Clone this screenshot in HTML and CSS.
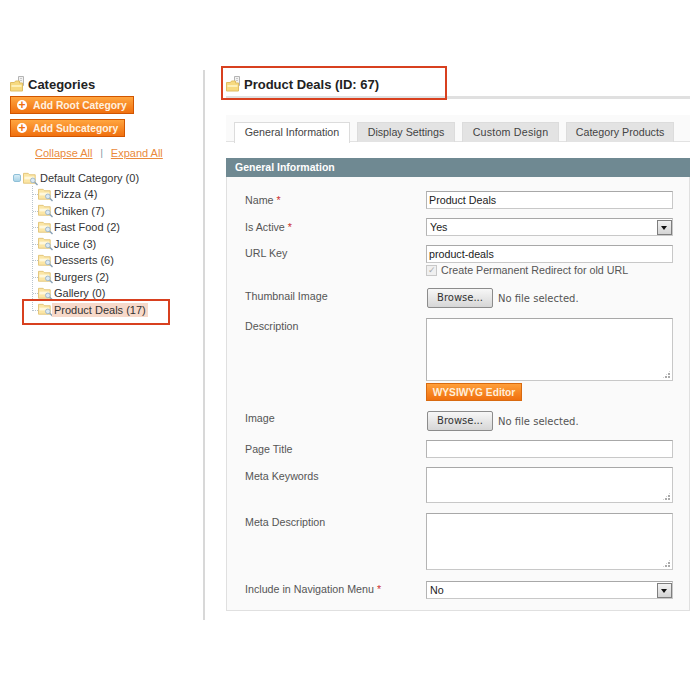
FILE: index.html
```html
<!DOCTYPE html>
<html lang="en">
<head>
    <meta charset="UTF-8">
    <title>Product Deals (ID: 67)</title>
    <link rel="stylesheet" href="styles.css">
</head>
<body>
    <svg class="defs" width="0" height="0">
        <symbol id="head-folder" viewBox="0 0 16 16">
            <path d="M8.500 .5h5v9h-5z" fill="#f2f2f2" stroke="#b4b4b4"/>
            <path d="M10 2.500h2M10 4.500h2" stroke="#c9c9c9"/>
            <path d="M.5 6.500h4l1-1.500h4v2h3v8h-12z" fill="#f7da80" stroke="#e0bd62"/>
            <path d="M1.500 9h10v2h-10z" fill="#fdf0b8"/>
        </symbol>
        <symbol id="tree-folder" viewBox="0 0 16 16">
            <path d="M.5 2.500h5l1.500 1.500h6v9h-12.500z" fill="#fbe6a6" stroke="#e2c477"/>
            <path d="M1.500 6h10.500v3h-10.500z" fill="#fff8dc"/>
            <circle cx="10.500" cy="10" r="2.500" fill="#dbe9f4" stroke="#9db5c8"/>
            <path d="M12.500 12l3 3" stroke="#88a0b4" stroke-width="1.500"/>
        </symbol>
    </svg>

    <div class="page">
        <div class="sidebar">
            <h3 class="side-title">
                <svg class="head-icon"><use href="#head-folder"/></svg>
                Categories
            </h3>
            <div class="side-buttons">
                <button class="add-btn">
                    <span class="plus">+</span>Add Root Category
                </button>
                <button class="add-btn">
                    <span class="plus">+</span>Add Subcategory
                </button>
            </div>
            <div class="tree-links">
                <a href="#">Collapse All</a>
                <span class="sep">|</span>
                <a href="#">Expand All</a>
            </div>
            <div class="tree">
                <div class="tree-root">
                    <span class="minus"></span>
                    <svg class="tree-icon"><use href="#tree-folder"/></svg>
                    <span class="node">Default Category (0)</span>
                </div>
                <ul class="tree-list">
                    <li><svg class="tree-icon"><use href="#tree-folder"/></svg><span class="node">Pizza (4)</span></li>
                    <li><svg class="tree-icon"><use href="#tree-folder"/></svg><span class="node">Chiken (7)</span></li>
                    <li><svg class="tree-icon"><use href="#tree-folder"/></svg><span class="node">Fast Food (2)</span></li>
                    <li><svg class="tree-icon"><use href="#tree-folder"/></svg><span class="node">Juice (3)</span></li>
                    <li><svg class="tree-icon"><use href="#tree-folder"/></svg><span class="node">Desserts (6)</span></li>
                    <li><svg class="tree-icon"><use href="#tree-folder"/></svg><span class="node">Burgers (2)</span></li>
                    <li><svg class="tree-icon"><use href="#tree-folder"/></svg><span class="node">Gallery (0)</span></li>
                    <li><svg class="tree-icon"><use href="#tree-folder"/></svg><span class="node selected">Product Deals (17)</span></li>
                </ul>
            </div>
            <div class="red-box box-tree"></div>
        </div>

        <div class="main">
            <h3 class="main-title">
                <svg class="head-icon"><use href="#head-folder"/></svg>
                Product Deals (ID: 67)
            </h3>
            <div class="red-box box-title"></div>

            <div class="tabs">
                <a class="tab tab-general active">General Information</a>
                <a class="tab tab-display">Display Settings</a>
                <a class="tab tab-design">Custom Design</a>
                <a class="tab tab-products">Category Products</a>
            </div>

            <div class="section-head">General Information</div>
            <div class="panel">
                <div class="row">
                    <label>Name <em>*</em></label>
                    <div class="value"><div class="input">Product Deals</div></div>
                </div>
                <div class="row">
                    <label>Is Active <em>*</em></label>
                    <div class="value"><div class="input select">Yes<span class="arrow"></span></div></div>
                </div>
                <div class="row row-url">
                    <label>URL Key</label>
                    <div class="value">
                        <div class="input">product-deals</div>
                        <div class="check-line"><span class="check">&#10003;</span>Create Permanent Redirect for old URL</div>
                    </div>
                </div>
                <div class="row row-thumb">
                    <label>Thumbnail Image</label>
                    <div class="value file"><span class="browse">Browse...</span>No file selected.</div>
                </div>
                <div class="row row-desc">
                    <label>Description</label>
                    <div class="value">
                        <div class="textarea desc"><span class="grip"></span></div>
                        <button class="wysiwyg">WYSIWYG Editor</button>
                    </div>
                </div>
                <div class="row row-image">
                    <label>Image</label>
                    <div class="value file"><span class="browse">Browse...</span>No file selected.</div>
                </div>
                <div class="row">
                    <label>Page Title</label>
                    <div class="value"><div class="input"></div></div>
                </div>
                <div class="row row-keywords">
                    <label>Meta Keywords</label>
                    <div class="value"><div class="textarea keywords"><span class="grip"></span></div></div>
                </div>
                <div class="row row-meta">
                    <label>Meta Description</label>
                    <div class="value"><div class="textarea meta"><span class="grip"></span></div></div>
                </div>
                <div class="row row-last">
                    <label>Include in Navigation Menu <em>*</em></label>
                    <div class="value"><div class="input select">No<span class="arrow"></span></div></div>
                </div>
            </div>
        </div>
    </div>
</body>
</html>
```

FILE: styles.css
```css
* {
    box-sizing: border-box;
}
body {
    margin: 0;
    background-color: white;
    font-family: "Liberation Sans", Arial, sans-serif;
    font-size: 11px;
    color: #444;
}
.defs {
    position: absolute;
}
.page {
    display: flex;
    padding-top: 70px;
    height: 700px;
}
.sidebar {
    position: relative;
    width: 205px;
    height: 550px;
    border-right: 2px solid #d8d8d8;
    padding: 6px 0 0 10px;
}
.head-icon {
    width: 16px;
    height: 16px;
    flex: none;
}
.side-title, .main-title {
    display: flex;
    align-items: center;
    gap: 2px;
    margin: 0;
    font-size: 13px;
    font-weight: bold;
    color: #222;
}
.side-title {
    height: 16px;
}
.side-buttons {
    display: flex;
    flex-direction: column;
    align-items: flex-start;
    gap: 5px;
    margin-top: 4px;
}
.add-btn {
    display: flex;
    align-items: center;
    height: 18px;
    padding: 0 6px;
    border: 1px solid #d15500;
    background: linear-gradient(#ffa53f, #f0700f);
    color: #fff2e0;
    font: bold 10.300px "Liberation Sans", Arial, sans-serif;
}
.plus {
    width: 10px;
    height: 10px;
    margin-right: 6px;
    border-radius: 50%;
    background-color: #fff;
    color: #f0700f;
    font-size: 12px;
    line-height: 10px;
    text-align: center;
}
.tree-links {
    margin: 10px 0 0 25px;
    display: flex;
    gap: 8px;
    line-height: 13px;
    font-size: 11px;
}
.tree-links a {
    color: #ea8a3c;
    text-decoration: underline;
}
.sep {
    color: #6d8d9a;
    font-size: 9px;
}
.tree {
    margin-top: 10px;
    margin-left: 3px;
    font-size: 11px;
    color: #333;
}
.tree-root {
    display: flex;
    align-items: center;
    height: 16px;
}
.minus {
    width: 8px;
    height: 8px;
    margin-right: 2px;
    border: 1px solid #8fc0d8;
    border-radius: 2px;
    background: linear-gradient(#d8edf7, #a9d3e6);
}
.tree-icon {
    width: 15px;
    height: 15px;
    flex: none;
}
.node {
    padding: 0 2px;
    line-height: 14px;
}
.tree-list {
    list-style: none;
    margin: 0 0 0 19px;
    padding: 0 0 0 5px;
    border-left: 1px dotted #b9c4cc;
    height: 125px;
}
.tree-list li {
    position: relative;
    display: flex;
    align-items: center;
    height: 16.500px;
}
.tree-list li::before {
    content: "";
    position: absolute;
    left: -5px;
    top: 8px;
    width: 5px;
    border-top: 1px dotted #b9c4cc;
}
.tree-list .node {
    margin-left: -1px;
}
.selected {
    background-color: #f7d9ca;
}
.red-box {
    position: absolute;
    border: 2px solid #d8401f;
}
.box-tree {
    left: 22px;
    top: 229px;
    width: 148px;
    height: 26px;
}
.box-title {
    left: -5px;
    top: -4px;
    width: 226px;
    height: 34px;
}
.main {
    position: relative;
    margin-left: 21px;
    width: 464px;
}
.main-title {
    height: 29px;
    border-bottom: 3px solid #e0e0e0;
    align-items: flex-start;
    padding-top: 6px;
    line-height: 17px;
}
.tabs {
    display: flex;
    gap: 7px;
    margin-top: 16px;
    height: 27px;
    padding: 7px 0 0 8px;
    background-color: #fafafa;
    border-bottom: 1px solid #e2e2e2;
}
.tab {
    flex: none;
    height: 20px;
    border: 1px solid #dcdcdc;
    border-bottom: none;
    background-color: #e3e3e3;
    line-height: 19px;
    font-size: 10.700px;
    text-align: center;
    color: #444;
}
.tab.active {
    height: 21px;
    background-color: white;
}
.tab-general {
    width: 116px;
}
.tab-display {
    width: 98px;
}
.tab-design {
    width: 97px;
    letter-spacing: 0.2px;
}
.tab-products {
    width: 108px;
}
.section-head {
    height: 19px;
    margin-top: 16px;
    padding-left: 9px;
    background-color: #6f8992;
    color: white;
    font-size: 10.500px;
    font-weight: bold;
    line-height: 19px;
}
.panel {
    height: 434px;
    padding: 14px 16px 0 18px;
    background-color: #fafafa;
    border: 1px solid #e0e0e0;
    border-top: none;
}
.row {
    display: flex;
    margin-bottom: 9px;
}
.row label {
    width: 181px;
    flex: none;
    padding-top: 2px;
    font-size: 10.700px;
    line-height: 14px;
    color: #555;
}
.row em {
    color: #c33;
    font-style: normal;
}
.value {
    width: 247px;
}
.input {
    position: relative;
    height: 18px;
    padding-left: 2px;
    border: 1px solid #c8c8c8;
    border-top-color: #a8a8a8;
    border-left-color: #b4b4b4;
    background-color: white;
    font-size: 10.700px;
    line-height: 16px;
    color: #222;
}
.select {
    padding-left: 3px;
}
.arrow {
    position: absolute;
    right: 0;
    top: 1px;
    width: 15px;
    height: 15px;
    border: 1px solid #7e7e7e;
    background: linear-gradient(#f2f2f2, #d4d4d4);
}
.arrow::after {
    content: "";
    position: absolute;
    left: 3px;
    top: 5px;
    border: 3px solid transparent;
    border-top: 4px solid #111;
    border-bottom: none;
}
.check-line {
    display: flex;
    align-items: center;
    height: 14px;
    font-size: 10.700px;
    color: #555;
}
.check {
    width: 11px;
    height: 11px;
    margin-right: 4px;
    border: 1px solid #c8c8c8;
    background-color: #f0f0f0;
    color: #aaa;
    font-size: 9px;
    line-height: 9px;
    text-align: center;
}
.file {
    display: flex;
    align-items: center;
    height: 20px;
    padding-left: 1px;
    font-family: "DejaVu Sans", sans-serif;
    font-size: 10px;
    color: #555;
}
.browse {
    width: 66px;
    height: 20px;
    margin-right: 5px;
    border: 1px solid #8c8c8c;
    border-radius: 2px;
    background: linear-gradient(#f7f7f7, #d6d6d6);
    line-height: 18px;
    text-align: center;
    color: #333;
}
.row-url {
    margin-bottom: 11px;
}
.row-url label, .row-thumb label, .row-desc label, .row-last label {
    padding-top: 1px;
}
.row-thumb {
    margin-bottom: 10px;
}
.row-desc {
    margin-bottom: 10px;
}
.row-image label {
    padding-top: 0;
}
.row-keywords {
    margin-bottom: 10px;
}
.row-meta {
    margin-bottom: 11px;
}
.row-last {
    margin-bottom: 0;
}
.textarea {
    position: relative;
    border: 1px solid #c8c8c8;
    border-top-color: #a8a8a8;
    border-left-color: #b4b4b4;
    background-color: white;
}
.desc {
    height: 63px;
}
.keywords {
    height: 36px;
}
.meta {
    height: 57px;
}
.grip {
    position: absolute;
    right: 1px;
    bottom: 1px;
    width: 9px;
    height: 9px;
    background: radial-gradient(circle at 1px 1px, #aaa 1px, transparent 1px) 0 0 / 3px 3px;
    clip-path: polygon(100% 0, 100% 100%, 0 100%);
}
.wysiwyg {
    display: block;
    width: 96px;
    height: 18px;
    margin-top: 2px;
    padding: 0;
    border: 1px solid #d86a10;
    background: linear-gradient(#ff9f3a, #f0700f);
    color: #ffeeda;
    font: bold 10.200px "Liberation Sans", Arial, sans-serif;
}
```
